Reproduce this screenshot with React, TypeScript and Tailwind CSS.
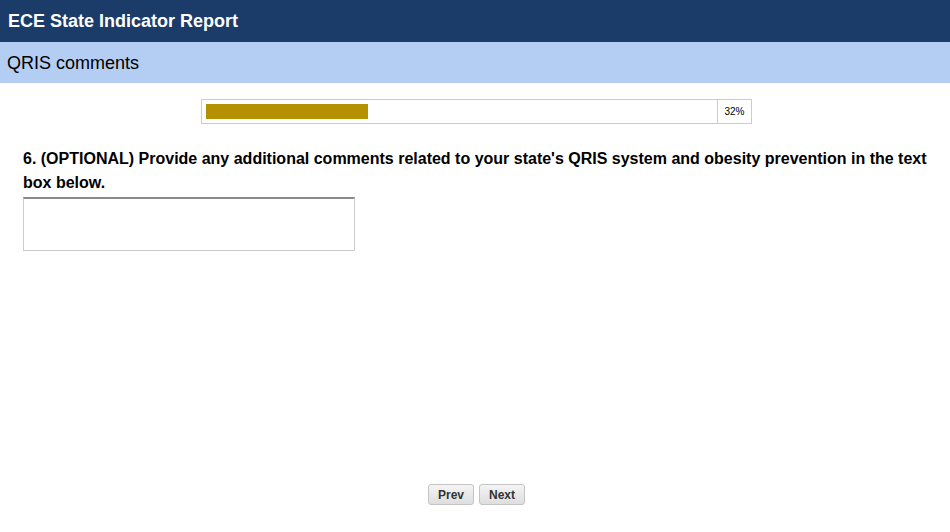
import React from "react";

export default function App() {
  return (
    <div className="w-[950px] h-[532px] bg-white font-['Liberation_Sans',Arial,sans-serif] text-black flex flex-col">
      <div className="h-[42px] bg-[#1b3c69] flex items-center px-[8px]">
        <span className="text-white font-bold text-[18px] leading-none">ECE State Indicator Report</span>
      </div>
      <div className="h-[41px] bg-[#b4cef3] flex items-center px-[7px]">
        <span className="text-[18px] leading-none">QRIS comments</span>
      </div>
      <div className="flex justify-center pt-[16px] pl-[3px]">
        <div className="w-[551px] h-[25px] border border-[#cccccc] flex">
          <div className="flex-1 flex items-center pl-[4px]">
            <div className="w-[162px] h-[15px] bg-[#b39100]" />
          </div>
          <div className="w-[34px] border-l border-[#cccccc] flex items-center justify-center text-[10px] leading-none">32%</div>
        </div>
      </div>
      <div className="pl-[23px] pr-[12px] pt-[23px] text-[16px] font-bold leading-[24px]">
        6. (OPTIONAL) Provide any additional comments related to your state's QRIS system and obesity prevention in the text box below.
      </div>
      <div className="pl-[23px] pt-[2px]">
        <textarea className="block w-[332px] h-[54px] border border-[#cccccc] border-t-[#8a8a8a] border-t-2 resize-none outline-none" />
      </div>
      <div className="flex-1" />
      <div className="flex justify-center gap-[5px] pb-[27px] pl-[3px]">
        <button className="w-[46px] h-[21px] rounded-[3px] border border-[#c4c4c4] bg-gradient-to-b from-[#f4f4f4] to-[#dedede] text-[12px] font-bold text-[#333333] leading-none">Prev</button>
        <button className="w-[46px] h-[21px] rounded-[3px] border border-[#c4c4c4] bg-gradient-to-b from-[#f4f4f4] to-[#dedede] text-[12px] font-bold text-[#333333] leading-none">Next</button>
      </div>
    </div>
  );
}
